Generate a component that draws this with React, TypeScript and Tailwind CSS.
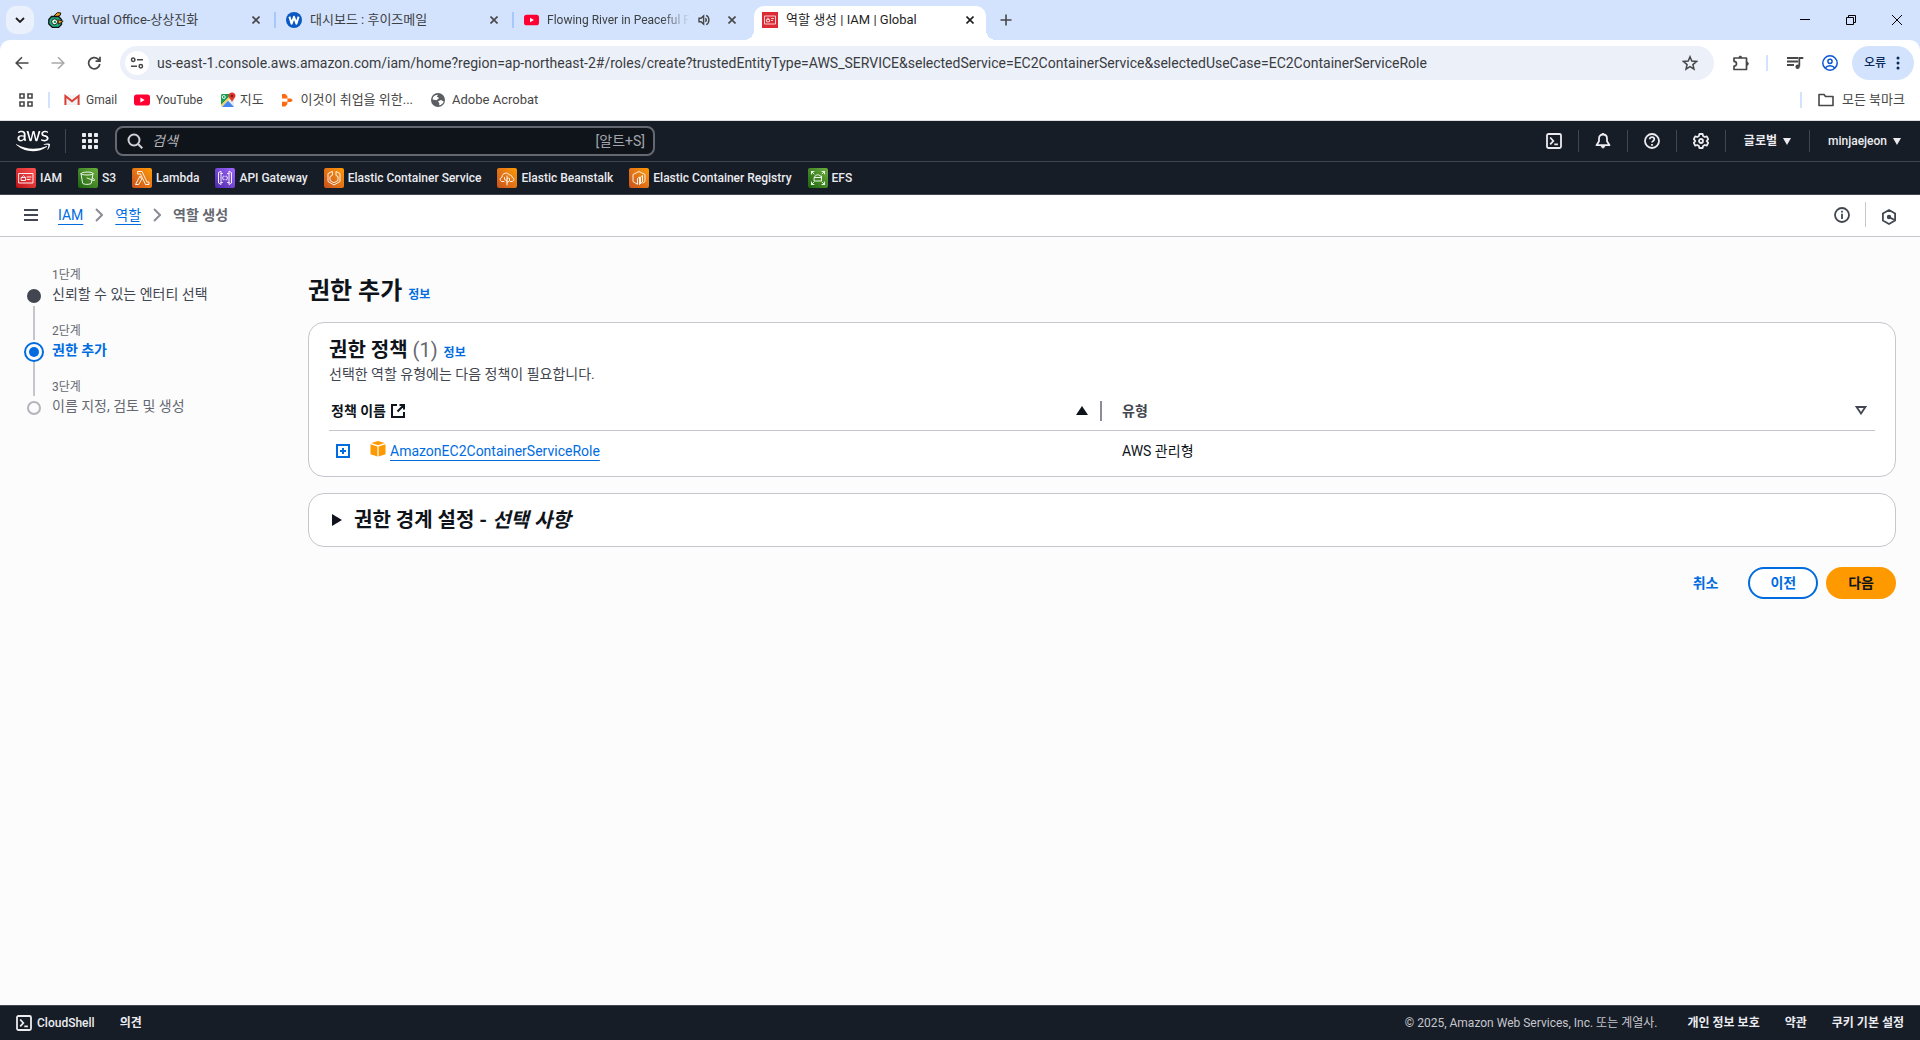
import React from "react";
import { FaAws } from "react-icons/fa";

const CHROME_FONT = "font-['Roboto','Noto_Sans_CJK_KR',sans-serif]";

type IconProps = { className?: string };

/* ---------- browser icons ---------- */

const CloseIcon = ({ className = "size-2" }: IconProps) => (
  <svg viewBox="0 0 8 8" className={className} fill="none" stroke="currentColor" strokeWidth="1.6" aria-hidden="true">
    <path d="M.5.5l7 7M7.5.5l-7 7" />
  </svg>
);

const OfficeIcon = () => (
  <svg viewBox="0 0 16 16" className="size-4" aria-hidden="true">
    <path d="M6 3.800L9.500.6 12.800 1 12 3.600 8.500 5z" fill="#f59e1b" stroke="#111" strokeWidth="1" />
    <path d="M3.500 4.500h7l3 3v5l-3 3H4.500L.8 12V7.500z" fill="#1fb07c" stroke="#111" strokeWidth="1.300" />
    <path d="M10 7.800l5.200 1.400-4.700 3z" fill="#f59e1b" stroke="#111" strokeWidth=".8" />
    <circle cx="6.600" cy="9.800" r="2.900" fill="#fff" stroke="#111" strokeWidth=".9" />
    <path d="M5.800 8.800h2.200v2.200H5.800z" fill="#1d9a6c" />
  </svg>
);

const WhoisIcon = () => (
  <svg viewBox="0 0 16 16" className="size-4" aria-hidden="true">
    <circle cx="8" cy="8" r="8" fill="#0b57c4" />
    <path d="M3.400 4.600l2.200 7L8 4.800l2.400 6.800 2.200-7" fill="none" stroke="#fff" strokeWidth="2" strokeLinejoin="round" />
  </svg>
);

const YouTubeIcon = ({ className = "size-4" }: IconProps) => (
  <svg viewBox="0 0 16 16" className={className} aria-hidden="true">
    <rect y="2.4" width="16" height="11.2" rx="2.8" fill="#ff0033" />
    <path d="M6.4 5.6L10.6 8l-4.2 2.4z" fill="#fff" />
  </svg>
);

const IamTabIcon = () => (
  <svg viewBox="0 0 16 16" className="size-4" aria-hidden="true">
    <rect width="16" height="16" fill="#dd2b35" />
    <g fill="none" stroke="#fff" strokeWidth=".9" opacity=".85">
      <path d="M2.5 4h11v8h-11z" />
      <path d="M4.5 7.5h3v2.3h-3zM5.2 7.2c0-1.6 1.6-1.6 1.6 0M9 6.5h3M9 8.5h2" />
    </g>
  </svg>
);

const SpeakerIcon = () => (
  <svg viewBox="0 0 12 12" className="size-3" fill="none" stroke="#474747" strokeWidth="1.4" aria-hidden="true">
    <path d="M1 4.3h2l2.6-2.4v8.2L3 7.7H1z" />
    <path d="M7.4 4.2c1 1 1 2.6 0 3.6M8.2 1.3c3.6 1.6 3.6 7.8 0 9.4" />
  </svg>
);

const GmailIcon = () => (
  <svg viewBox="0 0 16 16" className="size-4" aria-hidden="true">
    <path d="M1.5 3.3h13v9.6h-13z" fill="#f1f1f1" />
    <path d="M1.4 13V4l6.6 5.2L14.6 4v9" fill="none" stroke="#d93f35" strokeWidth="2" />
  </svg>
);

const MapsIcon = () => (
  <svg viewBox="0 0 16 16" className="size-4" aria-hidden="true">
    <rect x="1" y="2" width="13" height="13" rx="1.5" fill="#e8eaed" />
    <path d="M1 3.5C1 2.6 1.700 2 2.500 2H12L1 13z" fill="#1a9e55" />
    <path d="M2 15l6-6.200L14 15z" fill="#4285f4" />
    <path d="M1 13L11 3l1 1L2 14.500z" fill="#fbd04a" />
    <circle cx="3.800" cy="5" r="1.500" fill="none" stroke="#fff" strokeWidth=".9" />
    <path d="M12 .5c2 0 3.500 1.500 3.500 3.300 0 2.300-2.700 3.500-3.500 6.200-.8-2.700-3.500-3.900-3.500-6.200C8.500 2 10 .5 12 .5z" fill="#e1352b" />
    <circle cx="12" cy="3.900" r="1.200" fill="#7c1710" />
  </svg>
);

const OrangeBookmarkIcon = () => (
  <svg viewBox="0 0 12 16" className="h-4 w-3" fill="#ff6b12" aria-hidden="true">
    <path d="M1 2h3.200l2.200 2v2.600H1zM6.400 6.400H10L11.800 8.200 10 10H6.400zM1 9.800h5.400v2.400L4.200 14.400H1z" />
  </svg>
);

const GlobeIcon = () => (
  <svg viewBox="0 0 16 16" className="size-4" aria-hidden="true">
    <circle cx="8" cy="8" r="7" fill="#5a5d61" />
    <path d="M3 5.500C4 3.500 6 2.600 8.200 2.700L6.800 4.600l2.300 1.300L6.600 8.300 2.600 7.600zM8 9.300l3-1.300 2.700 1.400c-.6 2-2.400 3.600-4.600 3.900l.3-1.900z" fill="#fff" />
  </svg>
);

const PuzzleIcon = () => (
  <svg viewBox="0 0 18 18" className="size-[18px]" fill="none" stroke="#474747" strokeWidth="1.700" strokeLinejoin="round" aria-hidden="true">
    <path d="M2 4h12.500v11.500H2v-3.300c1.700 0 2.500-1 2.500-2.400S3.700 7.300 2 7.300z" />
    <path d="M6.800 3.600c0-2 3-2 3 0zM14.800 8c2.200 0 2.200 3.300 0 3.300z" fill="#474747" strokeWidth=".8" />
  </svg>
);

const MusicIcon = () => (
  <svg viewBox="0 0 18 18" className="size-[18px]" fill="none" stroke="#474747" strokeWidth="1.800" aria-hidden="true">
    <path d="M1 4h11M1 7.500h11M1 11h7M13.300 12.500V4h4" />
    <circle cx="11.600" cy="12.700" r="2.200" fill="#474747" stroke="none" />
  </svg>
);

/* ---------- console icons ---------- */

const ShellIcon = () => (
  <svg viewBox="0 0 16 16" className="size-4" fill="none" stroke="currentColor" strokeWidth="1.800" aria-hidden="true">
    <rect x="1" y="1" width="14" height="14" rx="1.500" />
    <path d="M4.200 4.500L7.300 8l-3.100 3.400M8.300 11.400h3.600" />
  </svg>
);

const BellIcon = () => (
  <svg viewBox="0 0 16 16" className="size-4" fill="none" stroke="currentColor" strokeWidth="1.800" strokeLinejoin="round" aria-hidden="true">
    <path d="M8 1.500c2.500 0 4 1.800 4 4.200v2.600l2.500 3.900h-13L4 8.300V5.700c0-2.400 1.500-4.200 4-4.200z" />
    <path d="M6.300 13c0 2.600 3.400 2.600 3.400 0z" fill="currentColor" stroke="currentColor" strokeWidth=".8" />
    <path d="M8 0v2" />
  </svg>
);

const HelpIcon = () => (
  <svg viewBox="0 0 16 16" className="size-4" fill="none" stroke="currentColor" strokeWidth="1.800" aria-hidden="true">
    <circle cx="8" cy="8" r="7" />
    <path d="M5.700 6.300c0-2.900 4.600-2.900 4.600 0C10.300 8 8 7.800 8 9.600M8 11v1.700" />
  </svg>
);

const GearIcon = () => (
  <svg viewBox="0 0 16 16" className="size-4" fill="none" stroke="currentColor" strokeWidth="1.800" strokeLinejoin="round" aria-hidden="true">
    <path d="M6.400 1h3.200l.5 2 1.700 1 2-.6 1.400 2.800L13.700 8l1.500 1.800-1.400 2.800-2-.6-1.700 1-.5 2H6.400l-.5-2-1.700-1-2 .6L.8 9.800 2.300 8 .8 6.200l1.400-2.800 2 .6 1.700-1z" />
    <circle cx="8" cy="8" r="2" />
  </svg>
);

const Caret = () => (
  <svg viewBox="0 0 8 7" className="h-[7px] w-2" fill="currentColor" aria-hidden="true">
    <path d="M0 0h8L4 7z" />
  </svg>
);

const SearchIcon = () => (
  <svg viewBox="0 0 16 16" className="size-4 shrink-0" fill="none" stroke="#d1d1d6" strokeWidth="2" aria-hidden="true">
    <circle cx="7" cy="7" r="5.500" />
    <path d="M11 11l4.300 4.300" />
  </svg>
);

const AppGridIcon = () => (
  <svg viewBox="0 0 16 16" className="size-4" fill="#ebebf0" aria-hidden="true">
    {[0, 6, 12].map((y) => [0, 6, 12].map((x) => <rect key={`${x}-${y}`} x={x} y={y} width="4" height="4" rx=".8" />))}
  </svg>
);

const Chevron = () => (
  <svg viewBox="0 0 8 14" className="h-3.5 w-2" fill="none" stroke="#8c8c94" strokeWidth="2" aria-hidden="true">
    <path d="M1 1l6 6-6 6" />
  </svg>
);

const InfoIcon = () => (
  <svg viewBox="0 0 16 16" className="size-4" fill="none" stroke="#424650" strokeWidth="1.800" aria-hidden="true">
    <circle cx="8" cy="8" r="7" />
    <path d="M8 6.800V12M8 3.800v1.800" />
  </svg>
);

const HexIcon = () => (
  <svg viewBox="0 0 16 16" className="size-4" fill="none" stroke="#424650" strokeWidth="1.800" strokeLinejoin="round" aria-hidden="true">
    <path d="M8 1l6.100 3.500v7L8 15l-6.100-3.500v-7z" />
    <circle cx="8" cy="8" r="2.200" fill="#424650" stroke="none" />
    <path d="M8 8l5.500 3" />
  </svg>
);

const ExternalIcon = () => (
  <svg viewBox="0 0 16 16" className="size-4" fill="none" stroke="#0f141a" strokeWidth="2" aria-hidden="true">
    <path d="M7 2H2v12h12V9M9.500 2H14v4.500M14 2L7.500 8.500" />
  </svg>
);

const CubeIcon = () => (
  <svg viewBox="0 0 16 16" className="size-4" fill="#f90" aria-hidden="true">
    <path d="M8 0l6.700 2L8 4.300 1.300 2zM.5 3.200l6.900 2.300V15.500L.5 13.300zM15.500 3.200L8.600 5.500V15.500l6.900-2.200z" />
  </svg>
);

/* ---------- data ---------- */

const services = [
  { name: "IAM", tile: "bg-linear-to-tr from-[#bd0816] to-[#ff5252]", path: "M3 5.500h14v9.500H3zM5.500 9.500h4V12.500h-4zM6.300 9.300c0-2.300 2.400-2.300 2.400 0M11 9h4M11 11.500h3" },
  { name: "S3", tile: "bg-linear-to-tr from-[#1b660f] to-[#6cae3e]", path: "M3 5.500c0-2 12-2 12 0s-12 2-12 0l1.600 9.500c0 1.800 8.800 1.800 8.800 0L15 5.500M9 10l6.500 2.500c2 .3 1-1.500-.8-2.500" },
  { name: "Lambda", tile: "bg-linear-to-tr from-[#c8511b] to-[#f90]", path: "M6 3.500h4l5 10.500h2v2.500h-3.500L8.500 6H6zM7.800 8.500L3.500 16.500h3.200L9.500 11.500z" },
  { name: "API Gateway", tile: "bg-linear-to-tr from-[#4d27a8] to-[#a166ff]", path: "M6 3.500v13L3.500 15V5zM14 3.500v13l2.500-1.500V5zM6 5.500h1.500M6 14.500h1.500M12.500 5.500H14M12.500 14.500H14M8.500 8L7.500 10l1 2M11.500 8l1 2-1 2M10 8.500v0M10 11.500v0" },
  { name: "Elastic Container Service", tile: "bg-linear-to-tr from-[#c8511b] to-[#f90]", path: "M8 3.500L4 5.500v8L10 17l6-3.500v-8l-4-2v4l2 1v4L10 14.800l-4-2.300v-4l2-1z" },
  { name: "Elastic Beanstalk", tile: "bg-linear-to-tr from-[#c8511b] to-[#f90]", path: "M7 13.500H5c-2.500-.3-2.500-4 0-4.200C5 4.500 11 4 12.500 7c2 0 2.500 1 2.500 2.300 2.500.3 2.500 4 0 4.200h-1.500M10 17V8M10 13L7.500 11.500V9.500M10 14.500l2.500-1.500v-2.500M10 11l1.500-1" },
  { name: "Elastic Container Registry", tile: "bg-linear-to-tr from-[#c8511b] to-[#f90]", path: "M8 16L4 13.500v-7L10 3.500l6 3v7L14 15M8.500 16V10.500l2-1.500v7.500M11.500 15.500V9l2-1.500v6.500l-2 1.500" },
  { name: "EFS", tile: "bg-linear-to-tr from-[#1b660f] to-[#6cae3e]", path: "M3.500 6V3.500H6M14 3.500h2.500V6M3.500 14v2.500H6M14 16.500h2.500V14M3.500 3.500L6 6M16.500 3.500L14 6M3.500 16.500L6 14M16.500 16.500L14 14M6.500 9.500h7V13h-7zM6.500 9.500C6.500 6.500 11 6 12 8h1.500v1.500" },
];

const steps = [
  { caption: "1단계", label: "신뢰할 수 있는 엔터티 선택", state: "done" },
  { caption: "2단계", label: "권한 추가", state: "current" },
  { caption: "3단계", label: "이름 지정, 검토 및 생성", state: "todo" },
];

/* ---------- browser chrome ---------- */

function Tab({ icon, title, fade, audio, small }: { icon: React.ReactNode; title: string; fade?: boolean; audio?: boolean; small?: boolean }) {
  return (
    <div className="flex h-7 w-[238px] items-center pr-[18px] pl-2">
      {icon}
      <span className={`ml-2 flex-1 whitespace-nowrap text-[#3c4043] ${small ? "text-xs" : "text-[13px]"} ${fade ? "mask-r-from-80%" : ""}`}>{title}</span>
      {audio && (
        <span className="mr-[18px] ml-2">
          <SpeakerIcon />
        </span>
      )}
      <button type="button" aria-label="탭 닫기" className="text-[#474747]">
        <CloseIcon />
      </button>
    </div>
  );
}

const TabDivider = () => <span className="mr-0.5 -ml-1 h-4 w-0.5 bg-[#a8c7fa]" />;

function TabStrip() {
  return (
    <div className="flex h-10 items-center bg-[#d3e3fd] pl-1.5">
      <button type="button" aria-label="탭 검색" className="mr-1.5 grid size-7 place-items-center rounded-[10px] bg-[#ebf1fc]">
        <svg viewBox="0 0 10 6" className="h-1.5 w-2.5" fill="none" stroke="#1f1f1f" strokeWidth="1.800" aria-hidden="true">
          <path d="M1 1l4 4 4-4" />
        </svg>
      </button>
      <Tab icon={<OfficeIcon />} title="Virtual Office-상상진화" />
      <TabDivider />
      <Tab icon={<WhoisIcon />} title="대시보드 : 후이즈메일" />
      <TabDivider />
      <Tab icon={<YouTubeIcon />} title="Flowing River in Peaceful F" small fade audio />
      <div className="relative flex h-[34px] w-[232px] items-center self-end rounded-t-[10px] bg-white pr-3 pb-1.5 pl-2 before:absolute before:bottom-0 before:-left-2.5 before:size-2.5 before:bg-[radial-gradient(circle_at_0_0,transparent_10px,white_10px)] after:absolute after:-right-2.5 after:bottom-0 after:size-2.5 after:bg-[radial-gradient(circle_at_100%_0,transparent_10px,white_10px)]">
        <IamTabIcon />
        <span className="ml-2 flex-1 text-[13px] whitespace-nowrap text-[#1f1f1f]">역할 생성 | IAM | Global</span>
        <button type="button" aria-label="탭 닫기" className="text-[#1f1f1f]">
          <CloseIcon />
        </button>
      </div>
      <button type="button" aria-label="새 탭" className="ml-[14px] text-[#474747]">
        <svg viewBox="0 0 12 12" className="size-3" stroke="currentColor" strokeWidth="1.600" aria-hidden="true">
          <path d="M6 .5v11M.5 6h11" />
        </svg>
      </button>
      <div className="ml-auto flex items-center gap-9 pr-[18px] text-black">
        <button type="button" aria-label="최소화">
          <svg viewBox="0 0 10 10" className="size-2.5" aria-hidden="true"><path d="M0 4.500h10" stroke="currentColor" /></svg>
        </button>
        <button type="button" aria-label="이전 크기로 복원">
          <svg viewBox="0 0 10 10" className="size-2.5" fill="none" stroke="currentColor" aria-hidden="true"><path d="M.5 2.500h7v7h-7zM2.500 2.500v-2h7v7h-2" /></svg>
        </button>
        <button type="button" aria-label="닫기">
          <svg viewBox="0 0 10 10" className="size-2.5" stroke="currentColor" aria-hidden="true"><path d="M0 0l10 10M10 0L0 10" /></svg>
        </button>
      </div>
    </div>
  );
}

function Toolbar() {
  return (
    <div className="bg-[#d3e3fd]">
      <div className="flex h-[46px] items-center rounded-t-[10px] bg-white pr-1.5 pl-[15px]">
        <div className="flex items-center gap-[22px] text-[#474747]">
          <button type="button" aria-label="뒤로">
            <svg viewBox="0 0 14 14" className="size-3.5" fill="none" stroke="currentColor" strokeWidth="1.600" aria-hidden="true"><path d="M13.500 7H1.500M7 1.200L1.200 7 7 12.800" /></svg>
          </button>
          <button type="button" aria-label="앞으로" className="text-[#a9a9a9]">
            <svg viewBox="0 0 14 14" className="size-3.5" fill="none" stroke="currentColor" strokeWidth="1.600" aria-hidden="true"><path d="M.5 7h12M7 1.200L12.800 7 7 12.800" /></svg>
          </button>
          <button type="button" aria-label="새로고침">
            <svg viewBox="0 0 14 14" className="size-3.5" fill="none" stroke="currentColor" strokeWidth="1.700" aria-hidden="true"><path d="M12.800 8A5.600 5.600 0 1 1 11 3l1.600 1.700M13 .8v4.400H8.600" /></svg>
          </button>
        </div>
        <div className="ml-[19px] flex h-[34px] flex-1 items-center rounded-full bg-[#ecf0f9] pr-4 pl-[5px]">
          <button type="button" aria-label="사이트 정보 보기" className="grid size-6 place-items-center rounded-full bg-white">
            <svg viewBox="0 0 14 12" className="h-3 w-3.5" fill="none" stroke="#474747" strokeWidth="1.500" aria-hidden="true">
              <circle cx="3.200" cy="2.700" r="1.700" />
              <path d="M7 2.700h6M1 9.300h6" />
              <circle cx="10.800" cy="9.300" r="1.700" />
            </svg>
          </button>
          <input
            type="text"
            aria-label="주소창"
            className="ml-2 min-w-0 flex-1 bg-transparent text-sm text-[#3a3c3f] outline-none"
            defaultValue="us-east-1.console.aws.amazon.com/iam/home?region=ap-northeast-2#/roles/create?trustedEntityType=AWS_SERVICE&selectedService=EC2ContainerService&selectedUseCase=EC2ContainerServiceRole"
          />
          <button type="button" aria-label="북마크에 추가">
            <svg viewBox="0 0 16 16" className="size-4" fill="none" stroke="#474747" strokeWidth="1.500" aria-hidden="true"><path d="M8 1.800l1.800 4.300 4.700.4-3.600 3.100 1.100 4.600L8 11.700l-4 2.500 1.100-4.600L1.500 6.500l4.700-.4z" /></svg>
          </button>
        </div>
        <div className="flex items-center">
          <button type="button" aria-label="확장 프로그램" className="ml-[18px]"><PuzzleIcon /></button>
          <span className="ml-4 h-4 w-0.5 bg-[#d3e3fd]" />
          <button type="button" aria-label="미디어 제어" className="ml-[18px]"><MusicIcon /></button>
          <button type="button" aria-label="프로필" className="mr-[14px] ml-[18px]">
            <svg viewBox="0 0 16 16" className="size-4" fill="none" stroke="#0b57d0" strokeWidth="1.500" aria-hidden="true">
              <circle cx="8" cy="8" r="7.200" />
              <circle cx="8" cy="6.300" r="2.100" />
              <path d="M3.300 13c2-3 7.400-3 9.400 0" />
            </svg>
          </button>
          <button type="button" className="flex h-[34px] items-center gap-2.5 rounded-full bg-[#d3e3fd] pr-[14px] pl-3 text-xs font-medium text-[#0a2a5c]">
            오류
            <svg viewBox="0 0 4 14" className="h-3.5 w-1" fill="currentColor" aria-hidden="true"><circle cx="2" cy="2" r="1.500" /><circle cx="2" cy="7" r="1.500" /><circle cx="2" cy="12" r="1.500" /></svg>
          </button>
        </div>
      </div>
    </div>
  );
}

function BookmarksBar() {
  return (
    <nav aria-label="북마크" className="flex h-[35px] items-center border-b border-[#dedede] bg-white pr-[15px] pb-1.5 pl-[19px] text-xs text-[#474747]">
      <button type="button" aria-label="앱">
        <svg viewBox="0 0 14 14" className="size-3.5" fill="none" stroke="#474747" strokeWidth="1.600" aria-hidden="true"><path d="M1 1h4v4H1zM9 1h4v4H9zM1 9h4v4H1zM9 9h4v4H9z" /></svg>
      </button>
      <span className="mr-[14px] ml-[15px] h-4 w-0.5 bg-[#d3e3fd]" />
      <div className="flex items-center gap-[17px]">
        <a href="#gmail" className="flex items-center gap-1.5"><GmailIcon />Gmail</a>
        <a href="#youtube" className="flex items-center gap-1.5"><YouTubeIcon />YouTube</a>
        <a href="#maps" className="flex items-center gap-1 text-[13px]"><MapsIcon />지도</a>
        <a href="#jobs" className="flex items-center gap-2 text-[13px]"><OrangeBookmarkIcon />이것이 취업을 위한...</a>
        <a href="#acrobat" className="flex items-center gap-1.5 text-[13px]"><GlobeIcon />Adobe Acrobat</a>
      </div>
      <span className="mr-4 ml-auto h-4 w-0.5 bg-[#d3e3fd]" />
      <button type="button" className="flex items-center gap-2 text-[13px]">
        <svg viewBox="0 0 16 14" className="h-3.5 w-4" fill="none" stroke="#474747" strokeWidth="1.600" strokeLinejoin="round" aria-hidden="true"><path d="M1 1.500h5l1.500 2H15v9H1z" /></svg>
        모든 북마크
      </button>
    </nav>
  );
}

/* ---------- console ---------- */

const Divider = () => <span className="h-[22px] w-px bg-[#424650]" />;

function ConsoleHeader() {
  return (
    <header className="bg-[#161d26] text-xs font-bold text-[#ebebf0]">
      <div className="flex h-[41px] items-center border-b border-[#424650] pr-[19px] pl-4">
        <a href="#home" aria-label="AWS" className="text-white"><FaAws className="size-[34px]" /></a>
        <span className="ml-[15px] h-6 w-px bg-[#424650]" />
        <button type="button" aria-label="서비스" className="ml-4"><AppGridIcon /></button>
        <label className="ml-[17px] flex h-[30px] w-[540px] items-center gap-[9px] rounded-lg border-2 border-[#656871] bg-[#0f141a] pr-2 pl-2.5">
          <SearchIcon />
          <input type="search" aria-label="검색" placeholder="검색" className="min-w-0 flex-1 bg-transparent text-sm font-normal outline-none placeholder:text-[#b4b4bb] placeholder:italic" />
          <span className="text-sm font-normal text-[#a4a4ad]">[알트+S]</span>
        </label>
        <div className="ml-auto flex items-center">
          <div className="flex items-center gap-4">
            <button type="button" aria-label="CloudShell"><ShellIcon /></button>
            <Divider />
            <button type="button" aria-label="알림"><BellIcon /></button>
            <Divider />
            <button type="button" aria-label="지원"><HelpIcon /></button>
            <Divider />
            <button type="button" aria-label="설정"><GearIcon /></button>
            <Divider />
          </div>
          <button type="button" className="mr-[18px] ml-[18px] flex items-center gap-1.5">글로벌<Caret /></button>
          <Divider />
          <button type="button" className="ml-[18px] flex items-center gap-1.5 font-medium">minjaejeon<Caret /></button>
        </div>
      </div>
      <nav aria-label="즐겨찾기" className="flex h-[33px] items-center gap-4 border-b border-[#424650] px-4 font-medium">
        {services.map((s) => (
          <a key={s.name} href="#service" className="flex items-center gap-1 whitespace-nowrap">
            <span className={`size-5 rounded-xs ${s.tile}`}>
              <svg viewBox="0 0 20 20" className="size-5" fill="none" stroke="#fff" strokeWidth=".9" strokeLinecap="round" strokeLinejoin="round" aria-hidden="true">
                <path d={s.path} />
              </svg>
            </span>
            {s.name}
          </a>
        ))}
      </nav>
    </header>
  );
}

function BreadcrumbBar() {
  return (
    <div className="flex h-[42px] items-center border-b border-[#c6c6cd] bg-white pr-[23px] pb-0.5 pl-6 text-sm">
      <button type="button" aria-label="탐색 열기">
        <svg viewBox="0 0 14 12" className="h-3 w-3.5" stroke="#424650" strokeWidth="2" aria-hidden="true"><path d="M0 1h14M0 6h14M0 11h14" /></svg>
      </button>
      <nav aria-label="이동 경로" className="ml-5">
        <ol className="flex items-center gap-3">
          <li><a href="#iam" className="text-[#006ce0] underline underline-offset-4">IAM</a></li>
          <li><Chevron /></li>
          <li><a href="#roles" className="text-[#006ce0] underline underline-offset-4">역할</a></li>
          <li><Chevron /></li>
          <li className="font-bold text-[#656871]">역할 생성</li>
        </ol>
      </nav>
      <div className="ml-auto flex items-center">
        <button type="button" aria-label="정보"><InfoIcon /></button>
        <span className="mr-[15px] ml-[15px] h-[25px] w-px bg-[#c6c6cd]" />
        <button type="button" aria-label="도구" className="pt-1"><HexIcon /></button>
      </div>
    </div>
  );
}

function StepMarker({ state }: { state: string }) {
  if (state === "current")
    return (
      <span className="grid size-5 place-items-center rounded-full border-2 border-[#006ce0]">
        <span className="size-2.5 rounded-full bg-[#006ce0]" />
      </span>
    );
  if (state === "done") return <span className="my-[3px] size-3.5 rounded-full bg-[#424650]" />;
  return <span className="my-[3px] size-3.5 rounded-full border-2 border-[#b4b4bb]" />;
}

function Steps() {
  return (
    <ol className="w-[260px] shrink-0 pt-7">
      {steps.map((s, i) => (
        <li key={s.caption} className="flex gap-2">
          <div className="flex w-5 flex-col items-center pt-[21px]">
            <StepMarker state={s.state} />
            {i < steps.length - 1 && <span className="-mb-[19px] h-[34px] w-0.5 bg-[#c6c6cd]" />}
          </div>
          <div className="pb-[18px]">
            <div className="text-xs leading-5 text-[#656871]">{s.caption}</div>
            <div className={`text-sm leading-[18px] ${s.state === "current" ? "font-bold text-[#006ce0]" : s.state === "done" ? "text-[#424650]" : "text-[#656871]"}`}>{s.label}</div>
          </div>
        </li>
      ))}
    </ol>
  );
}

const InfoLink = () => <a href="#info" className="ml-1.5 text-xs font-bold text-[#006ce0]">정보</a>;

function PolicyCard() {
  return (
    <section className="rounded-2xl border border-[#c6c6cd] bg-white px-5 pt-[13px] pb-1">
      <h2 className="text-xl leading-7 font-bold text-[#0f141a]">
        권한 정책 <span className="font-normal text-[#656871]">(1)</span>
        <InfoLink />
      </h2>
      <p className="text-sm leading-5 text-[#424650]">선택한 역할 유형에는 다음 정책이 필요합니다.</p>
      <table className="mt-1.5 w-full table-fixed text-left text-sm text-[#0f141a]">
        <colgroup>
          <col className="w-1/2" />
          <col className="w-1/2" />
        </colgroup>
        <thead>
          <tr className="h-10 border-b border-[#c6c6cd]">
            <th scope="col" className="p-0 pt-0.5 font-bold">
              <div className="flex items-center border-r-2 border-[#8c8c94] pr-3 pl-0.5">
                정책 이름
                <span className="ml-1"><ExternalIcon /></span>
                <button type="button" aria-label="정책 이름순 정렬" className="ml-auto">
                  <svg viewBox="0 0 12 9" className="h-[9px] w-3" fill="#0f141a" aria-hidden="true"><path d="M6 0l6 9H0z" /></svg>
                </button>
              </div>
            </th>
            <th scope="col" className="p-0 pt-0.5 font-bold text-[#424650]">
              <div className="flex items-center justify-between pr-2 pl-5">
                유형
                <button type="button" aria-label="유형순 정렬">
                  <svg viewBox="0 0 12 9" className="h-[9px] w-3" fill="none" stroke="#424650" strokeWidth="1.800" aria-hidden="true"><path d="M1.600 1h8.800L6 7.500z" /></svg>
                </button>
              </div>
            </th>
          </tr>
        </thead>
        <tbody>
          <tr className="h-[42px]">
            <td className="p-0">
              <div className="flex items-center pl-[7px]">
                <button type="button" aria-label="정책 펼치기">
                  <svg viewBox="0 0 14 14" className="size-3.5" fill="none" stroke="#006ce0" strokeWidth="2" aria-hidden="true"><path d="M1 1h12v12H1zM7 4v6M4 7h6" /></svg>
                </button>
                <span className="ml-5 pb-1"><CubeIcon /></span>
                <a href="#policy" className="ml-1 text-[#006ce0] underline underline-offset-4">AmazonEC2ContainerServiceRole</a>
              </div>
            </td>
            <td className="py-0 pr-0 pl-5">AWS 관리형</td>
          </tr>
        </tbody>
      </table>
    </section>
  );
}

function ConsoleFooter() {
  return (
    <footer className="flex h-[35px] items-center border-t border-[#424650] bg-[#161d26] px-4 text-xs font-bold text-[#ebebf0]">
      <button type="button" className="flex items-center gap-[5px] font-medium"><ShellIcon />CloudShell</button>
      <a href="#feedback" className="ml-[25px]">의견</a>
      <span className="mr-[30px] ml-auto font-normal text-[#c6c6cd]">© 2025, Amazon Web Services, Inc. 또는 계열사.</span>
      <div className="flex gap-[25px]">
        <a href="#privacy">개인 정보 보호</a>
        <a href="#terms">약관</a>
        <a href="#cookies">쿠키 기본 설정</a>
      </div>
    </footer>
  );
}

export default function App() {
  return (
    <div className={`flex min-h-screen flex-col bg-[#fcfcfd] ${CHROME_FONT}`}>
      <TabStrip />
      <Toolbar />
      <BookmarksBar />
      <ConsoleHeader />
      <BreadcrumbBar />
      <main className="flex flex-1 gap-6 pr-6 pl-6">
        <Steps />
        <div className="min-w-0 flex-1 pt-[38px]">
          <h1 className="mb-[15px] text-2xl leading-8 font-bold text-[#0f141a]">
            권한 추가
            <InfoLink />
          </h1>
          <PolicyCard />
          <section className="mt-4 rounded-2xl border border-[#c6c6cd] bg-white px-5 py-3">
            <button type="button" aria-expanded="false" className="flex items-center gap-3 text-xl leading-7 font-bold text-[#0f141a]">
              <svg viewBox="0 0 10 12" className="ml-[3px] h-3 w-2.5" fill="currentColor" aria-hidden="true"><path d="M0 0l10 6-10 6z" /></svg>
              <span>권한 경계 설정 - <em>선택 사항</em></span>
            </button>
          </section>
          <div className="mt-5 flex items-center justify-end gap-2 text-sm font-bold">
            <button type="button" className="h-8 px-[22px] text-[#006ce0]">취소</button>
            <button type="button" className="h-8 rounded-full border-2 border-[#006ce0] bg-white px-5 text-[#006ce0]">이전</button>
            <button type="button" className="h-8 rounded-full bg-[#ff9900] px-[22px] text-[#0f141a]">다음</button>
          </div>
        </div>
      </main>
      <ConsoleFooter />
    </div>
  );
}
